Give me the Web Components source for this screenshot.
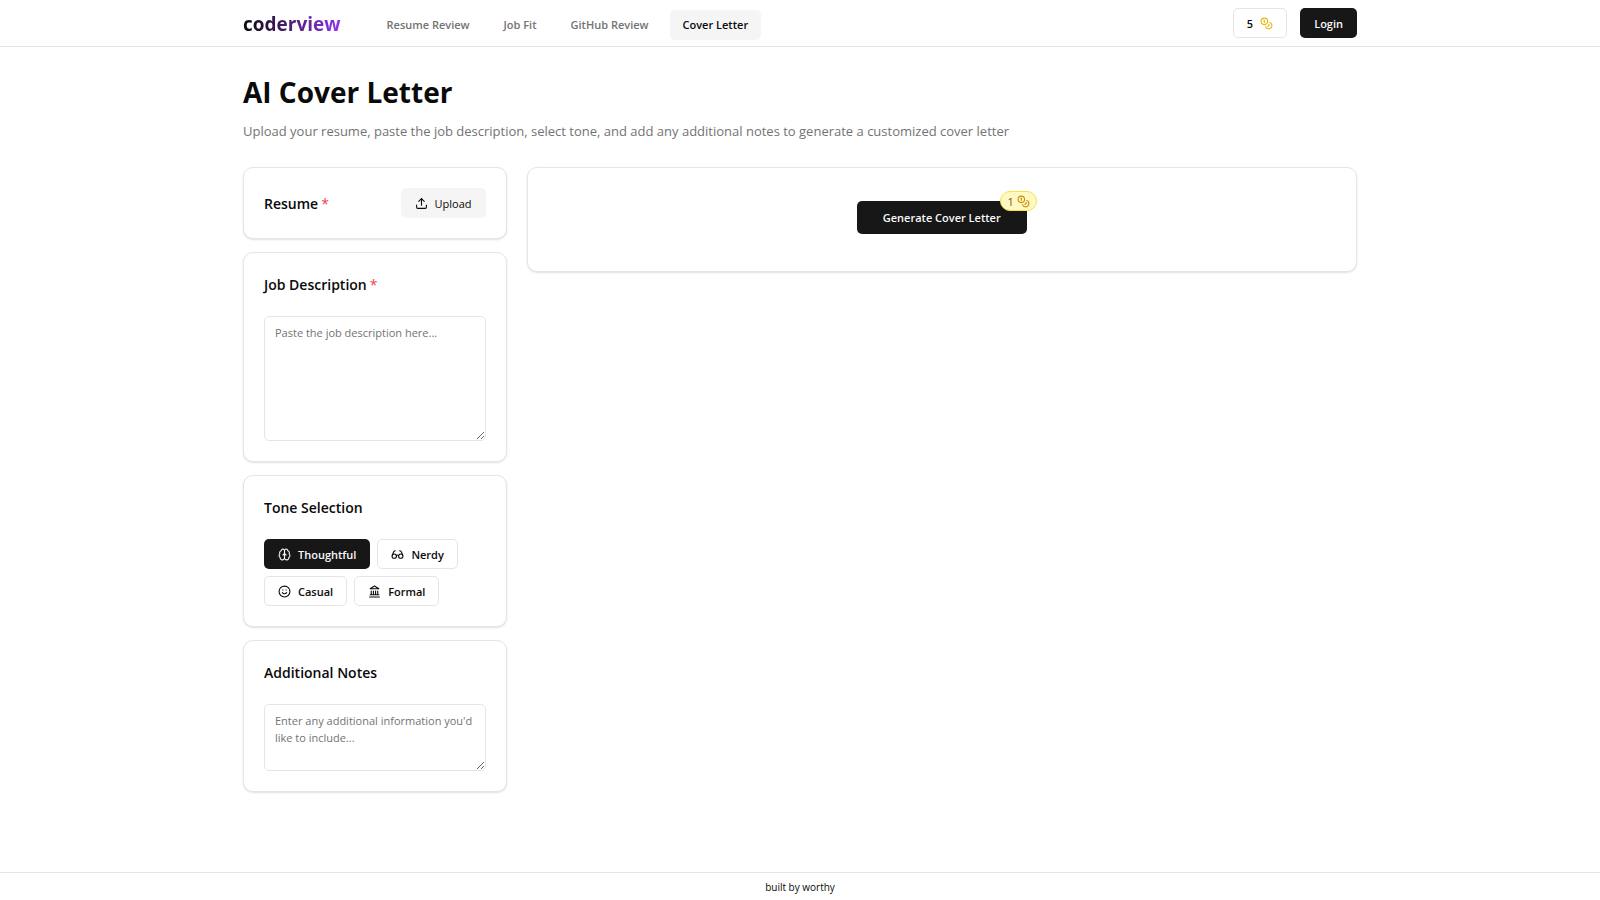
<!DOCTYPE html>
<html lang="en">
<head>
    <meta charset="UTF-8">
    <meta name="viewport" content="width=device-width, initial-scale=1.0">
    <title>AI Cover Letter | coderview</title>
    <style>
        :root {
            --fg: #0a0a0a;
            --primary: #171717;
            --muted: #737373;
            --soft: #f5f5f5;
            --border: #e5e5e5;
            --danger: #ef4444;
        }
        body {
            margin: 0;
            color: var(--fg);
            background-color: white;
            font: 11px/17px "Open Sans", "Noto Sans", sans-serif;
        }
    </style>
</head>
<body>
    <cover-letter-page></cover-letter-page>

<script>
    const icons = {
        coins: `<circle cx="8" cy="8" r="6"/><path d="M18.09 10.37A6 6 0 1 1 10.34 18"/><path d="M7 6h1v4"/><path d="m16.71 13.88.7.71-2.82 2.82"/>`,
        upload: `<path d="M21 15v4a2 2 0 0 1-2 2H5a2 2 0 0 1-2-2v-4"/><path d="m17 8-5-5-5 5"/><path d="M12 3v12"/>`,
        brain: `<path d="M12 5a3 3 0 1 0-5.997.125 4 4 0 0 0-2.526 5.77 4 4 0 0 0 .556 6.588A4 4 0 1 0 12 18Z"/><path d="M12 5a3 3 0 1 1 5.997.125 4 4 0 0 1 2.526 5.77 4 4 0 0 1-.556 6.588A4 4 0 1 1 12 18Z"/><path d="M15 13a4.5 4.5 0 0 1-3-4 4.5 4.5 0 0 1-3 4"/>`,
        glasses: `<circle cx="6" cy="15" r="4"/><circle cx="18" cy="15" r="4"/><path d="M14 15a2 2 0 0 0-4 0"/><path d="M2.5 13 5 7c.7-1.3 1.4-2 3-2"/><path d="M21.5 13 19 7c-.7-1.3-1.5-2-3-2"/>`,
        smile: `<circle cx="12" cy="12" r="10"/><path d="M8 14s1.5 2 4 2 4-2 4-2"/><path d="M9 9h.01M15 9h.01"/>`,
        landmark: `<path d="M3 22h18M6 18v-7M10 18v-7M14 18v-7M18 18v-7M4 18h16"/><path d="m12 2 8 5H4Z"/>`
    };

    class BaseElement extends HTMLElement {
        constructor(){
            super();
            this.attachShadow({ mode: "open" });
        }
        connectedCallback(){
            this.shadowRoot.innerHTML = `<style>${this.getStyle()}</style>${this.getTemplate()}`;
        }
    }

    class UiIcon extends BaseElement {
        getStyle(){
            return `
                :host { display: inline-flex; flex: none; width: 13px; height: 13px; }
                svg { width: 100%; height: 100%; }
            `;
        }
        getTemplate(){
            return `<svg viewBox="0 0 24 24" fill="none" stroke="currentColor" stroke-width="2"
                stroke-linecap="round" stroke-linejoin="round" aria-hidden="true">${icons[this.getAttribute("name")]}</svg>`;
        }
    }
    customElements.define("ui-icon", UiIcon);

    // variant: primary, secondary or outline
    class UiButton extends BaseElement {
        getStyle(){
            return `
                :host { display: inline-flex; position: relative; }
                button {
                    display: flex;
                    align-items: center;
                    justify-content: center;
                    gap: 7px;
                    height: 30px;
                    padding: 0 13px;
                    box-sizing: border-box;
                    border: 1px solid transparent;
                    border-radius: 5px;
                    font: inherit;
                    font-weight: 600;
                    color: var(--fg);
                    background-color: white;
                    cursor: pointer;
                    white-space: nowrap;
                }
                :host([variant="primary"]) button { color: #fafafa; background-color: var(--primary); }
                :host([variant="secondary"]) button { background-color: var(--soft); font-weight: 500; }
                :host([variant="outline"]) button { border-color: var(--border); }
                :host([size="large"]) button { height: 33px; padding: 0 25px; }
            `;
        }
        getTemplate(){
            return `<button type="button"><slot></slot></button><slot name="badge"></slot>`;
        }
    }
    customElements.define("ui-button", UiButton);

    class UiCard extends BaseElement {
        getStyle(){
            return `
                :host {
                    display: block;
                    padding: 20px;
                    border: 1px solid var(--border);
                    border-radius: 10px;
                    background-color: white;
                    box-shadow: 0 1px 2px rgba(0,0,0,.12);
                }
            `;
        }
        getTemplate(){
            return `<slot></slot>`;
        }
    }
    customElements.define("ui-card", UiCard);

    class CardTitle extends BaseElement {
        getStyle(){
            return `
                :host { display: block; font-size: 14px; line-height: 23px; font-weight: 600; }
                :host([required])::after { content: "*"; margin-left: 3px; font-weight: 400; color: var(--danger); }
            `;
        }
        getTemplate(){
            return `<slot></slot>`;
        }
    }
    customElements.define("card-title", CardTitle);

    class TextCard extends BaseElement {
        getStyle(){
            return `
                :host { display: block; }
                label { display: block; margin-bottom: 20px; }
                textarea {
                    display: block;
                    width: 100%;
                    box-sizing: border-box;
                    padding: 7px 10px;
                    border: 1px solid var(--border);
                    border-radius: 5px;
                    font: inherit;
                    color: var(--fg);
                    background-color: white;
                    resize: vertical;
                }
                textarea::placeholder { color: var(--muted); }
                .long { height: 125px; }
                .short { height: 67px; }
            `;
        }
        getTemplate(){
            const required = this.hasAttribute("required") ? "required" : "";
            return `
                <ui-card>
                    <label for="field"><card-title ${required}>${this.getAttribute("label")}</card-title></label>
                    <textarea id="field" class="${this.getAttribute("size")}" placeholder="${this.getAttribute("placeholder")}"></textarea>
                </ui-card>
            `;
        }
    }
    customElements.define("text-card", TextCard);

    class TonePicker extends BaseElement {
        constructor(){
            super();
            this.tone = "Thoughtful";
            this.tones = [["Thoughtful", "brain"], ["Nerdy", "glasses"], ["Casual", "smile"], ["Formal", "landmark"]];
        }
        connectedCallback(){
            super.connectedCallback();
            const buttons = this.shadowRoot.querySelectorAll("ui-button");
            buttons.forEach(button => button.addEventListener("click", () => {
                buttons.forEach(b => b.setAttribute("variant", b === button ? "primary" : "outline"));
            }));
        }
        getStyle(){
            return `
                :host { display: flex; flex-wrap: wrap; gap: 7px; }
            `;
        }
        getTemplate(){
            return this.tones.map(([name, icon]) => `
                <ui-button variant="${name === this.tone ? "primary" : "outline"}"><ui-icon name="${icon}"></ui-icon>${name}</ui-button>
            `).join("");
        }
    }
    customElements.define("tone-picker", TonePicker);

    class CostBadge extends BaseElement {
        getStyle(){
            return `
                :host {
                    position: absolute;
                    top: -10px;
                    right: -10px;
                    display: flex;
                    align-items: center;
                    gap: 3px;
                    height: 18px;
                    padding: 0 6px;
                    border: 1px solid #fde047;
                    border-radius: 10px;
                    background-color: #fef9c3;
                    color: #854d0e;
                    font-weight: 500;
                }
                ui-icon { color: #ca8a04; }
            `;
        }
        getTemplate(){
            return `<slot></slot><ui-icon name="coins"></ui-icon>`;
        }
    }
    customElements.define("cost-badge", CostBadge);

    class SiteHeader extends BaseElement {
        getStyle(){
            return `
                :host { display: block; border-bottom: 1px solid var(--border); }
                .bar {
                    display: flex;
                    align-items: center;
                    max-width: 1114px;
                    height: 46px;
                    margin: 0 auto;
                    padding: 0 26px;
                }
                .left {
                    display: flex;
                    align-items: center;
                    gap: 33px;
                    padding-top: 3px;
                }
                .logo {
                    font-size: 19px;
                    line-height: 27px;
                    font-weight: 700;
                    text-decoration: none;
                    color: transparent;
                    background: linear-gradient(to right, #0a0a0a, #9333ea);
                    -webkit-background-clip: text;
                    background-clip: text;
                }
                nav { display: flex; gap: 8px; }
                nav a {
                    padding: 0 13px;
                    border-radius: 5px;
                    line-height: 30px;
                    font-weight: 600;
                    color: var(--muted);
                    text-decoration: none;
                }
                nav a.active { color: var(--fg); background-color: var(--soft); }
                .right { display: flex; gap: 13px; margin-left: auto; }
                .right ui-icon { color: #eab308; }
            `;
        }
        getTemplate(){
            return `
                <div class="bar">
                    <div class="left">
                        <a class="logo" href="#">coderview</a>
                        <nav>
                            <a href="#resume">Resume Review</a>
                            <a href="#job-fit">Job Fit</a>
                            <a href="#github">GitHub Review</a>
                            <a href="#cover-letter" class="active">Cover Letter</a>
                        </nav>
                    </div>
                    <div class="right">
                        <ui-button variant="outline">5 <ui-icon name="coins"></ui-icon></ui-button>
                        <ui-button variant="primary">Login</ui-button>
                    </div>
                </div>
            `;
        }
    }
    customElements.define("site-header", SiteHeader);

    class CoverLetterPage extends BaseElement {
        getStyle(){
            return `
                :host { display: flex; flex-direction: column; min-height: 100vh; }
                main {
                    flex: 1;
                    box-sizing: border-box;
                    width: 100%;
                    max-width: 1166px;
                    margin: 0 auto;
                    padding: 27px 26px;
                }
                h1 { margin: 0; font-size: 28px; line-height: 37px; font-weight: 700; }
                .intro { margin: 10px 0 26px; font-size: 13px; line-height: 20px; color: var(--muted); }
                .grid {
                    display: grid;
                    grid-template-columns: repeat(4, 1fr);
                    gap: 20px;
                    align-items: start;
                }
                .inputs { display: flex; flex-direction: column; gap: 13px; }
                .result {
                    grid-column: span 3;
                    display: flex;
                    justify-content: center;
                    padding: 33px 20px 37px;
                }
                .resume { display: flex; align-items: center; justify-content: space-between; }
                tone-picker { margin-top: 20px; }
                footer {
                    padding: 8px 7px 6px;
                    border-top: 1px solid var(--border);
                    font-size: 10px;
                    line-height: 13px;
                    text-align: center;
                }
                @media (max-width: 900px) {
                    .grid { grid-template-columns: 1fr; }
                    .result { grid-column: auto; }
                }
            `;
        }
        getTemplate(){
            return `
                <site-header></site-header>
                <main>
                    <h1>AI Cover Letter</h1>
                    <p class="intro">Upload your resume, paste the job description, select tone, and add any additional notes to generate a customized cover letter</p>
                    <div class="grid">
                        <div class="inputs">
                            <ui-card>
                                <div class="resume">
                                    <card-title required>Resume</card-title>
                                    <ui-button variant="secondary"><ui-icon name="upload"></ui-icon>Upload</ui-button>
                                </div>
                            </ui-card>
                            <text-card label="Job Description" size="long" placeholder="Paste the job description here..." required></text-card>
                            <ui-card>
                                <card-title>Tone Selection</card-title>
                                <tone-picker></tone-picker>
                            </ui-card>
                            <text-card label="Additional Notes" size="short" placeholder="Enter any additional information you'd like to include..."></text-card>
                        </div>
                        <ui-card class="result">
                            <ui-button variant="primary" size="large">Generate Cover Letter<cost-badge slot="badge">1</cost-badge></ui-button>
                        </ui-card>
                    </div>
                </main>
                <footer>built by worthy</footer>
            `;
        }
    }
    customElements.define("cover-letter-page", CoverLetterPage);
</script>
</body>
</html>
